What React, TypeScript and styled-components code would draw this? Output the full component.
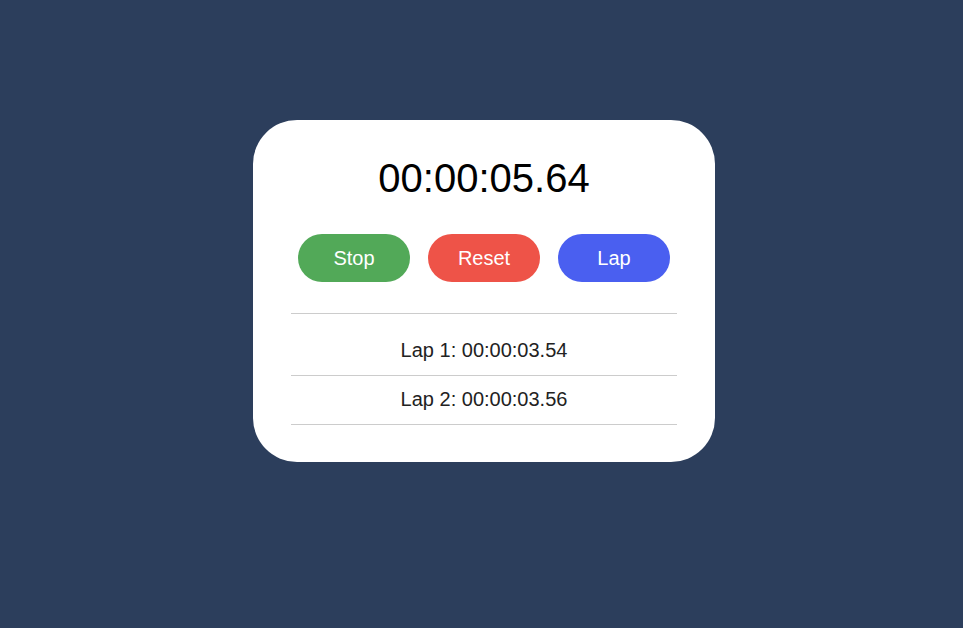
import React from "react";
import styled, { createGlobalStyle } from "styled-components";

const Global = createGlobalStyle`
  html, body { margin: 0; padding: 0; }
  body {
    background: #2c3e5c;
    font-family: "Liberation Sans", Arial, sans-serif;
  }
`;

const Page = styled.div`
  min-height: 628px;
  display: flex;
  flex-direction: column;
  align-items: center;
  padding: 120px 0 0 5px;
  box-sizing: border-box;
`;

const Card = styled.div`
  width: 462px;
  box-sizing: border-box;
  background: #ffffff;
  border-radius: 44px;
  padding: 35px 38px 37px;
  display: flex;
  flex-direction: column;
  align-items: stretch;
`;

const Time = styled.div`
  font-size: 40px;
  line-height: 46px;
  color: #000;
  text-align: center;
`;

const Controls = styled.div`
  display: flex;
  justify-content: center;
  gap: 18px;
  margin-top: 33px;
`;

const Button = styled.button<{ $bg: string }>`
  width: 112px;
  height: 48px;
  border: none;
  border-radius: 24px;
  background: ${(p) => p.$bg};
  color: #fff;
  font-family: "Liberation Sans", Arial, sans-serif;
  font-size: 20px;
  line-height: 46px;
  padding: 0;
  cursor: pointer;
`;

const LapList = styled.ul`
  list-style: none;
  margin: 31px 0 0;
  padding: 13px 0 0;
  border-top: 1px solid #cccccc;
`;

const LapItem = styled.li`
  padding: 11px 0 13px;
  line-height: 24px;
  font-size: 20px;
  color: #222;
  text-align: center;
  border-bottom: 1px solid #cccccc;
`;

const laps = ["00:00:03.54", "00:00:03.56"];

export default function App() {
  return (
    <>
      <Global />
      <Page>
        <Card>
          <Time>00:00:05.64</Time>
          <Controls>
            <Button $bg="#52a958">Stop</Button>
            <Button $bg="#ee5348">Reset</Button>
            <Button $bg="#4a5ff0">Lap</Button>
          </Controls>
          <LapList>
            {laps.map((l, i) => (
              <LapItem key={i}>
                Lap {i + 1}: {l}
              </LapItem>
            ))}
          </LapList>
        </Card>
      </Page>
    </>
  );
}
